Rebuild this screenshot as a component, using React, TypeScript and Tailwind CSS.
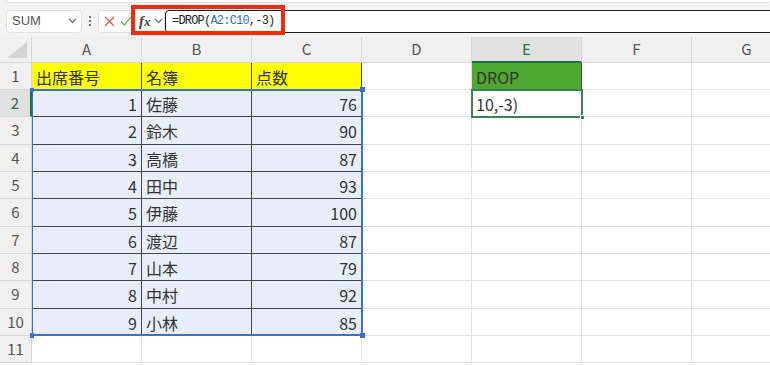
import type { ReactNode } from 'react';

const COLS = ['A', 'B', 'C', 'D', 'E', 'F', 'G'];

const TABLE: (string | number)[][] = [
  ['出席番号', '名簿', '点数'],
  [1, '佐藤', 76],
  [2, '鈴木', 90],
  [3, '高橋', 87],
  [4, '田中', 93],
  [5, '伊藤', 100],
  [6, '渡辺', 87],
  [7, '山本', 79],
  [8, '中村', 92],
  [9, '小林', 85],
];

const FONT = "font-['Noto_Sans_CJK_JP','Noto_Sans',sans-serif]";

function Chevron({ className = '' }: { className?: string }) {
  return (
    <svg className={className} width="9" height="6" viewBox="0 0 9 6" fill="none">
      <path d="M1 1l3.5 3.5L8 1" stroke="#666" strokeWidth="1.1" />
    </svg>
  );
}

function FormulaBar() {
  return (
    <div className="relative h-[37px] bg-[#f3f3f3]">
      {/* bottom edge of the ribbon */}
      <div className="absolute left-[6px] right-0 top-0 h-[3px] rounded-b-[4px] bg-white border-b border-l border-[#e4e4e4]" />
      <div className="flex items-center h-full pt-[5px] pl-[6px]">
        <div className="flex items-center justify-between w-[76px] h-[23px] bg-white border border-[#e2e2e2] rounded-[4px] pl-[5px] pr-[4px]">
          <span className="text-[13px] text-[#555] font-['Liberation_Sans',sans-serif]">SUM</span>
          <Chevron />
        </div>
        <svg className="ml-[5px]" width="6" height="12" viewBox="0 0 6 12">
          <circle cx="3" cy="2" r="1.1" fill="#555" />
          <circle cx="3" cy="6" r="1.1" fill="#555" />
          <circle cx="3" cy="10" r="1.1" fill="#555" />
        </svg>
        <div className="flex items-center ml-[5px] w-[67px] h-[23px] bg-white border border-[#e2e2e2] rounded-l-[4px]">
          <svg className="ml-[5px]" width="11" height="11" viewBox="0 0 11 11">
            <path d="M1 1l9 9M10 1l-9 9" stroke="#e0524f" strokeWidth="1.2" />
          </svg>
          <svg className="ml-[5px]" width="12" height="10" viewBox="0 0 12 10">
            <path d="M1 5.5l3.5 3.5L11 1" fill="none" stroke="#5fb760" strokeWidth="1.2" />
          </svg>
          <span className="ml-[7px] text-[15px] italic font-bold text-[#444] font-['Liberation_Serif',serif] leading-none">
            f<span className="text-[13px]">x</span>
          </span>
          <Chevron className="ml-[3px]" />
        </div>
        <div className="flex items-center flex-1 h-[23px] -mr-[4px] bg-white border border-[#1a1a1a] rounded-l-[4px] pl-[6px]">
          <span className="text-[12px] tracking-[-0.8px] text-[#222] font-['Liberation_Mono',monospace]">
            =DROP(<span className="text-[#2f6fc4]">A2:C10</span>,-3)
          </span>
        </div>
      </div>
      {/* red highlight frame */}
      <div className="absolute left-[131px] top-[5px] w-[154px] h-[30px] border-4 border-[#f52a0c]" />
    </div>
  );
}

function Cell({ children, className = '' }: { children?: ReactNode; className?: string }) {
  return (
    <div className={`flex items-center px-[4px] pt-[1px] text-[16px] text-[#333] border-r border-b overflow-hidden whitespace-nowrap ${className}`}>
      {children}
    </div>
  );
}

function Sheet() {
  const rows = Array.from({ length: 11 }, (_, i) => i + 1);

  return (
    <div className={`relative ${FONT}`}>
      <div className="grid grid-cols-[32px_110px_110px_110px_110px_110px_110px_110px] grid-rows-[26px_27px_27px_28px_27px_27px_28px_27px_27px_28px_27px_27px]">
        {/* corner */}
        <div className="flex items-end justify-end pr-[4px] pb-[4px] bg-[#f0f0f0] border-r border-b border-[#d6d6d6]">
          <svg width="20" height="16" viewBox="0 0 20 16">
            <polygon points="20,0 20,16 0,16" fill="#d4d4d4" />
          </svg>
        </div>
        {COLS.map((c) => (
          <div
            key={c}
            className={`flex items-center justify-center text-[15px] border-r ${
              c === 'E'
                ? 'bg-[#e1e1e1] text-[#217346] border-b-2 border-b-[#217346] border-r-[#d6d6d6]'
                : 'bg-[#f0f0f0] text-[#555] border-b border-[#d6d6d6]'
            }`}
          >
            {c}
          </div>
        ))}

        {rows.map((r) => {
          const rowData = TABLE[r - 1];
          return [
            <div
              key={`h${r}`}
              className={`flex items-center justify-center text-[15px] border-b ${
                r === 2
                  ? 'bg-[#e1e1e1] text-[#217346] border-r-2 border-r-[#217346] border-b-[#d6d6d6]'
                  : 'bg-[#f0f0f0] text-[#555] border-r border-[#d6d6d6]'
              }`}
            >
              {r}
            </div>,
            ...COLS.map((c, ci) => {
              const key = `${c}${r}`;
              if (rowData && ci < 3) {
                const v = rowData[ci];
                const header = r === 1;
                return (
                  <Cell
                    key={key}
                    className={`border-[#45484e] ${header ? 'bg-[#ffff00]' : 'bg-[#e9eff9]'} ${
                      typeof v === 'number' ? 'justify-end' : ''
                    }`}
                  >
                    {v}
                  </Cell>
                );
              }
              if (c === 'E' && r === 1) {
                return (
                  <Cell key={key} className="bg-[#4ea72e] border-[#2f6a1f] text-[#1a1a1a]">
                    DROP
                  </Cell>
                );
              }
              if (c === 'E' && r === 2) {
                return (
                  <Cell key={key} className="border-[#e1e1e1]">
                    10,-3)
                  </Cell>
                );
              }
              return <Cell key={key} className="border-[#e1e1e1]" />;
            }),
          ];
        })}
      </div>

      {/* referenced range A2:C10 */}
      <div className="absolute left-[32px] top-[52px] w-[331px] h-[247px] border-t-2 border-r-2 border-b-2 border-l border-[#3b6fd2] pointer-events-none">
        <div className="absolute -left-[3px] -top-[3px] w-[4px] h-[4px] bg-[#3b6fd2]" />
        <div className="absolute -right-[4px] -top-[4px] w-[5px] h-[5px] bg-[#3b6fd2]" />
        <div className="absolute -left-[3px] -bottom-[4px] w-[4px] h-[5px] bg-[#3b6fd2]" />
        <div className="absolute -right-[4px] -bottom-[4px] w-[5px] h-[5px] bg-[#3b6fd2]" />
      </div>

      {/* active cell E2 */}
      <div className="absolute left-[471px] top-[52px] w-[112px] h-[29px] border-2 border-[#3d7d58] pointer-events-none">
        <div className="absolute -right-[4px] -bottom-[4px] w-[5px] h-[5px] bg-[#3d7d58] border border-white" />
      </div>
    </div>
  );
}

export default function App() {
  return (
    <div className="w-[770px] h-[365px] overflow-hidden bg-white">
      <FormulaBar />
      <Sheet />
    </div>
  );
}
